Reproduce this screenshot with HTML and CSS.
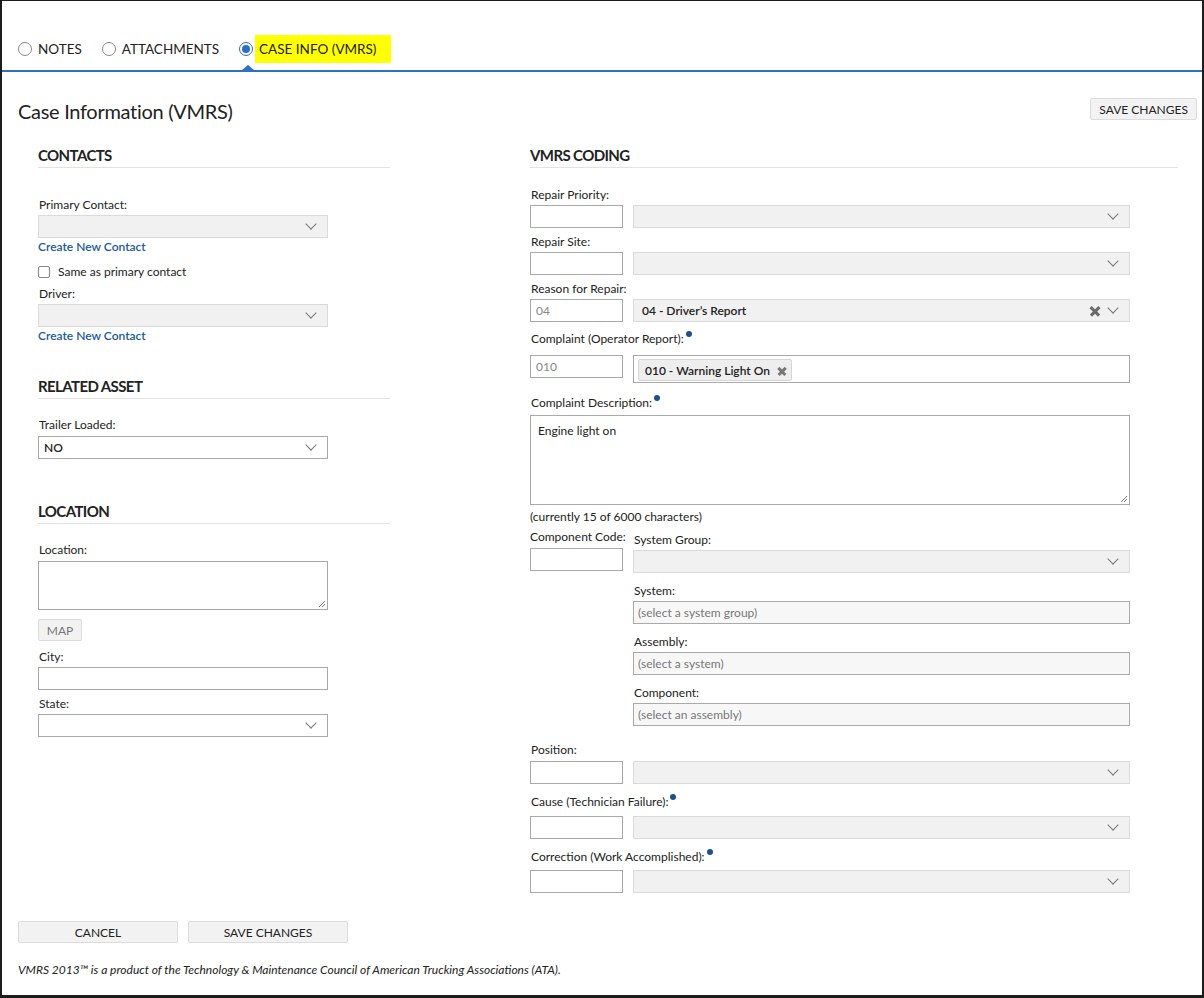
FILE: index.html
```html
<!DOCTYPE html>
<html lang="en">
<head>
<meta charset="UTF-8">
<title>Case Information (VMRS)</title>
<link rel="stylesheet" href="styles.css">
</head>
<body>
  <div class="frame">
    <div class="tabs">
      <label class="tab"><span class="radio"></span>NOTES</label>
      <label class="tab"><span class="radio"></span>ATTACHMENTS</label>
      <label class="tab active"><span class="radio checked"></span><span class="hl">CASE INFO (VMRS)</span></label>
    </div>
    <div class="tabline"><span class="caret"></span></div>

    <div class="titlebar">
      <h1>Case Information (VMRS)</h1>
      <button class="btn btn-top">SAVE CHANGES</button>
    </div>

    <div class="columns">
      <div class="col-left">
        <h2 class="section">CONTACTS</h2>
        <div class="lbl first">Primary Contact:</div>
        <div class="select grey"><span class="val"></span><span class="chev"></span></div>
        <a class="link">Create New Contact</a>
        <label class="check"><span class="box"></span>Same as primary contact</label>
        <div class="lbl sm">Driver:</div>
        <div class="select grey"><span class="val"></span><span class="chev"></span></div>
        <a class="link">Create New Contact</a>

        <h2 class="section gap">RELATED ASSET</h2>
        <div class="lbl after">Trailer Loaded:</div>
        <div class="select white"><span class="val">NO</span><span class="chev"></span></div>

        <h2 class="section gap2">LOCATION</h2>
        <div class="lbl after">Location:</div>
        <div class="textarea small"><span class="grip"></span></div>
        <button class="btn btn-map">MAP</button>
        <div class="lbl city">City:</div>
        <div class="input wide"></div>
        <div class="lbl sm">State:</div>
        <div class="select white"><span class="val"></span><span class="chev"></span></div>
      </div>

      <div class="col-right">
        <h2 class="section">VMRS CODING</h2>

        <div class="lbl r1">Repair Priority:</div>
        <div class="pair">
          <div class="code"></div>
          <div class="select grey flex"><span class="val"></span><span class="chev"></span></div>
        </div>

        <div class="lbl sm">Repair Site:</div>
        <div class="pair">
          <div class="code"></div>
          <div class="select grey flex"><span class="val"></span><span class="chev"></span></div>
        </div>

        <div class="lbl sm">Reason for Repair:</div>
        <div class="pair">
          <div class="code filled">04</div>
          <div class="select grey flex"><span class="val dark">04 - Driver’s Report</span><span class="clear"></span><span class="chev"></span></div>
        </div>

        <div class="lbl r4">Complaint (Operator Report):<span class="dot"></span></div>
        <div class="pair top">
          <div class="code filled">010</div>
          <div class="multi flex"><span class="tag">010 - Warning Light On<span class="clear small"></span></span></div>
        </div>

        <div class="lbl r5">Complaint Description:<span class="dot"></span></div>
        <div class="textarea big">Engine light on<span class="grip"></span></div>
        <div class="count">(currently 15 of 6000 characters)</div>

        <div class="component">
          <div class="comp-code">
            <div class="lbl nowrap">Component Code:</div>
            <div class="code"></div>
          </div>
          <div class="comp-fields">
            <div class="lbl sg">System Group:</div>
            <div class="select grey"><span class="val"></span><span class="chev"></span></div>
            <div class="lbl sub">System:</div>
            <div class="input grey ph">(select a system group)</div>
            <div class="lbl sub">Assembly:</div>
            <div class="input grey ph">(select a system)</div>
            <div class="lbl sub">Component:</div>
            <div class="input grey ph">(select an assembly)</div>
          </div>
        </div>

        <div class="lbl pos">Position:</div>
        <div class="pair">
          <div class="code"></div>
          <div class="select grey flex"><span class="val"></span><span class="chev"></span></div>
        </div>

        <div class="lbl r8">Cause (Technician Failure):<span class="dot"></span></div>
        <div class="pair">
          <div class="code"></div>
          <div class="select grey flex"><span class="val"></span><span class="chev"></span></div>
        </div>

        <div class="lbl r9">Correction (Work Accomplished):<span class="dot"></span></div>
        <div class="pair">
          <div class="code"></div>
          <div class="select grey flex"><span class="val"></span><span class="chev"></span></div>
        </div>
      </div>
    </div>

    <div class="actions">
      <button class="btn btn-wide">CANCEL</button>
      <button class="btn btn-wide">SAVE CHANGES</button>
    </div>
    <p class="footnote">VMRS 2013™ is a product of the Technology &amp; Maintenance Council of American Trucking Associations (ATA).</p>
  </div>
</body>
</html>
```

FILE: styles.css
```css
body {
  margin: 0;
  font-family: Lato, "Open Sans", Arial, sans-serif;
  color: #222;
  background: #fff;
}
.frame {
  box-sizing: border-box;
  width: 1204px;
  height: 998px;
  border: 2px solid #1c1c1c;
  border-top-width: 1px;
  border-bottom-width: 3px;
  overflow: hidden;
}

/* tabs */
.tabs {
  display: flex;
  align-items: center;
  height: 28px;
  margin-top: 34px;
  padding-left: 16px;
}
.tab {
  display: flex;
  align-items: center;
  font-size: 13.5px;
  margin-right: 20px;
}
.radio {
  box-sizing: border-box;
  width: 14px;
  height: 14px;
  border: 1px solid #8a8a8a;
  border-radius: 50%;
  margin-right: 6px;
  display: inline-flex;
  align-items: center;
  justify-content: center;
}
.radio.checked {
  border-color: #2b6fc4;
}
.radio.checked::after {
  content: "";
  width: 8px;
  height: 8px;
  border-radius: 50%;
  background: #2b6fc4;
}
.hl {
  background: #ffff00;
  height: 28px;
  line-height: 28px;
  padding: 0 15px 0 4px;
  margin-left: -4px;
}
.tabline {
  position: relative;
  height: 2px;
  margin-top: 7px;
  background: #2f6fc0;
}
.caret {
  position: absolute;
  left: 240px;
  top: -5px;
  border-left: 6px solid transparent;
  border-right: 6px solid transparent;
  border-bottom: 5px solid #2f6fc0;
}

/* title */
.titlebar {
  display: flex;
  justify-content: space-between;
  align-items: flex-start;
  padding: 25px 5px 0 16px;
}
h1 {
  margin: 0;
  font-size: 20px;
  font-weight: 400;
  line-height: 28px;
  letter-spacing: -0.3px;
}
.btn {
  font-family: inherit;
  font-size: 12px;
  color: #222;
  background: #f2f2f2;
  border: 1px solid #dcdcdc;
  border-radius: 2px;
  cursor: pointer;
}
.btn-top {
  height: 22px;
  padding: 0 8px;
  margin-top: 1px;
}

/* columns */
.columns {
  display: flex;
  padding-left: 36px;
  margin-top: 21px;
}
.col-left {
  width: 352px;
  display: flex;
  flex-direction: column;
  align-items: flex-start;
}
.col-right {
  width: 648px;
  margin-left: 140px;
}
.section {
  align-self: stretch;
  margin: 0;
  font-size: 15px;
  font-weight: 700;
  line-height: 18px;
  letter-spacing: -0.6px;
  padding-bottom: 3px;
  border-bottom: 1px solid #e2e2e2;
}
.section.gap { margin-top: 33px; }
.section.gap2 { margin-top: 43px; }

.lbl {
  font-size: 12px;
  line-height: 16px;
  margin-bottom: 2px;
  padding-left: 1px;
}
.lbl.first { margin-top: 29px; }
.lbl.sm { margin-top: 6px; }
.lbl.after { margin-top: 18px; margin-bottom: 3px; }
.lbl.city { margin-top: 8px; }
.lbl.r1 { margin-top: 19px; }
.lbl.r4 { margin-top: 9px; margin-bottom: 8px; }
.lbl.r5 { margin-top: 12px; margin-bottom: 4px; }
.lbl.pos { margin-top: 16px; margin-bottom: 3px; }
.lbl.r8 { margin-top: 10px; margin-bottom: 6px; }
.lbl.r9 { margin-top: 10px; margin-bottom: 5px; }
.lbl.nowrap { white-space: nowrap; margin-bottom: 3px; padding-left: 0; }
.lbl.sg { margin-top: 3px; }
.lbl.sub { margin-top: 10px; }
.dot {
  display: inline-block;
  width: 6px;
  height: 6px;
  border-radius: 50%;
  background: #1d4f8c;
  margin-left: 2px;
  vertical-align: 6px;
}

.select, .input, .code, .multi, .textarea {
  box-sizing: border-box;
  border: 1px solid #a9a9a9;
  background: #fff;
  font-size: 12px;
}
.select {
  position: relative;
  width: 290px;
  height: 23px;
  display: flex;
  align-items: center;
  padding: 0 12px 0 5px;
}
.select.grey {
  background: #f1f1f1;
  border-color: #dadada;
}
.select .val {
  flex: 1;
}
.select.white .val {
  font-weight: 600;
}
.val.dark {
  font-weight: 600;
  padding-left: 3px;
}
.chev {
  width: 7px;
  height: 7px;
  border-right: 1px solid #777;
  border-bottom: 1px solid #777;
  transform: rotate(45deg);
  margin-top: -5px;
}
.clear {
  position: relative;
  width: 10px;
  height: 10px;
  margin-right: 9px;
}
.clear::before, .clear::after {
  content: "";
  position: absolute;
  left: -1px;
  top: 4px;
  width: 12px;
  height: 2.5px;
  background: #6b6b6b;
  transform: rotate(45deg);
}
.clear::after {
  transform: rotate(-45deg);
}
.clear.small {
  width: 9px;
  height: 9px;
  margin: 0 0 0 7px;
}
.clear.small::before, .clear.small::after {
  width: 10px;
  top: 4px;
  left: 0;
  background: #777;
}

.link {
  font-size: 12px;
  line-height: 16px;
  color: #1b5a98;
  margin-top: 1px;
  font-weight: 600;
}
.check {
  display: flex;
  align-items: center;
  font-size: 12px;
  line-height: 16px;
  margin-top: 9px;
}
.box {
  box-sizing: border-box;
  width: 12px;
  height: 12px;
  border: 1px solid #888;
  border-radius: 2px;
  margin-right: 8px;
}

.textarea {
  position: relative;
}
.textarea.small {
  width: 290px;
  height: 49px;
}
.textarea.big {
  width: 600px;
  height: 90px;
  padding: 7px 7px;
}
.grip {
  position: absolute;
  right: 2px;
  bottom: 2px;
  width: 6px;
  height: 6px;
  background: linear-gradient(135deg, transparent 45%, #777 45%, #777 55%, transparent 55%, transparent 72%, #777 72%, #777 82%, transparent 82%);
}
.btn-map {
  margin-top: 9px;
  width: 44px;
  height: 22px;
  color: #777;
  padding: 0;
}
.input {
  height: 23px;
  display: flex;
  align-items: center;
  padding: 0 4px;
}
.input.wide {
  width: 290px;
}
.input.grey {
  background: #f7f7f7;
  border-color: #a9a9a9;
}
.ph {
  color: #777;
}

.pair {
  display: flex;
  align-items: center;
  width: 600px;
}
.pair.top {
  align-items: flex-start;
}
.code {
  width: 93px;
  height: 23px;
  flex: none;
  margin-right: 10px;
  color: #888;
  padding: 0 5px;
  display: flex;
  align-items: center;
}
.flex {
  flex: 1;
  width: auto;
}
.multi {
  height: 28px;
  padding: 3px 4px;
}
.tag {
  display: inline-flex;
  align-items: center;
  height: 20px;
  padding: 0 5px 0 6px;
  background: #eee;
  border: 1px solid #d6d6d6;
  border-radius: 2px;
  font-weight: 600;
}
.count {
  font-size: 12px;
  line-height: 16px;
  margin-top: 4px;
}

.component {
  display: flex;
  width: 600px;
  margin-top: 4px;
}
.comp-code {
  width: 103px;
  flex: none;
}
.comp-fields {
  flex: 1;
}
.comp-fields .select {
  width: 100%;
}

/* bottom */
.actions {
  display: flex;
  gap: 10px;
  padding-left: 16px;
  margin-top: 28px;
}
.btn-wide {
  width: 160px;
  height: 22px;
}
.footnote {
  margin: 19px 0 0 16px;
  font-size: 12px;
  font-style: italic;
  line-height: 16px;
}
```
